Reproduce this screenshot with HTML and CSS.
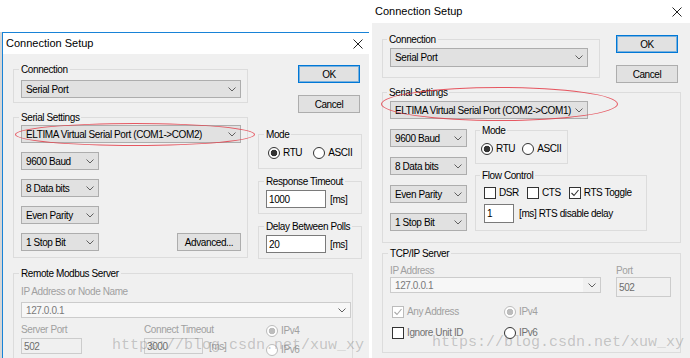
FILE: index.html
```html
<!DOCTYPE html>
<html lang="en">
<head>
  <meta charset="UTF-8">
  <title>Connection Setup</title>
  <link rel="stylesheet" href="styles.css">
</head>
<body>
<div class="desk">
  <div class="behind"></div>

  <!-- first dialog: Modbus master -->
  <div class="dlg dlg-a">
    <div class="titlebar">
      <span>Connection Setup</span>
      <svg class="close" width="10" height="10" viewBox="0 0 10 10"><path d="M0.5 0.5 9.5 9.5M9.5 0.5 0.5 9.5"/></svg>
    </div>
    <div class="body body-a">
      <div class="cols-a">
        <div class="col-a-left">
          <fieldset class="grp conn-a">
            <legend>Connection</legend>
            <div class="in">
              <div class="combo wide-a"><span>Serial Port</span><svg class="chev" width="8" height="5" viewBox="0 0 8 5"><path d="M0.5 0.5 4 4 7.5 0.5"/></svg></div>
            </div>
          </fieldset>
          <fieldset class="grp serial-a">
            <legend>Serial Settings</legend>
            <div class="in stack-a">
              <div class="combo wide-a"><span>ELTIMA Virtual Serial Port (COM1-&gt;COM2)</span><svg class="chev" width="8" height="5" viewBox="0 0 8 5"><path d="M0.5 0.5 4 4 7.5 0.5"/></svg></div>
              <div class="combo short-a"><span>9600 Baud</span><svg class="chev" width="8" height="5" viewBox="0 0 8 5"><path d="M0.5 0.5 4 4 7.5 0.5"/></svg></div>
              <div class="combo short-a"><span>8 Data bits</span><svg class="chev" width="8" height="5" viewBox="0 0 8 5"><path d="M0.5 0.5 4 4 7.5 0.5"/></svg></div>
              <div class="combo short-a"><span>Even Parity</span><svg class="chev" width="8" height="5" viewBox="0 0 8 5"><path d="M0.5 0.5 4 4 7.5 0.5"/></svg></div>
              <div class="stop-row">
                <div class="combo short-a"><span>1 Stop Bit</span><svg class="chev" width="8" height="5" viewBox="0 0 8 5"><path d="M0.5 0.5 4 4 7.5 0.5"/></svg></div>
                <button class="btn adv">Advanced...</button>
              </div>
            </div>
          </fieldset>
        </div>
        <div class="col-a-right">
          <button class="btn btn-default ok-a">OK</button>
          <button class="btn cancel-a">Cancel</button>
          <fieldset class="grp mode-a">
            <legend>Mode</legend>
            <div class="in radios radios-a">
              <label class="opt"><span class="radio on"></span>RTU</label>
              <label class="opt"><span class="radio"></span>ASCII</label>
            </div>
          </fieldset>
          <fieldset class="grp timeout-a">
            <legend>Response Timeout</legend>
            <div class="in ms-row"><div class="field ms-field">1000</div><span>[ms]</span></div>
          </fieldset>
          <fieldset class="grp timeout-a">
            <legend>Delay Between Polls</legend>
            <div class="in ms-row"><div class="field ms-field">20</div><span>[ms]</span></div>
          </fieldset>
        </div>
      </div>

      <fieldset class="grp remote">
        <legend>Remote Modbus Server</legend>
        <div class="in">
          <div class="off-label">IP Address or Node Name</div>
          <div class="combo edit node-combo"><span>127.0.0.1</span><svg class="chev" width="8" height="5" viewBox="0 0 8 5"><path d="M0.5 0.5 4 4 7.5 0.5"/></svg></div>
          <div class="remote-grid">
            <div>
              <div class="off-label">Server Port</div>
              <div class="field off port-a">502</div>
            </div>
            <div>
              <div class="off-label">Connect Timeout</div>
              <div class="ms-row ct-row"><div class="field off ct">3000</div><span class="off-text">[ms]</span></div>
            </div>
            <div class="ip-col">
              <label class="opt off-text"><span class="radio on off"></span>IPv4</label>
              <label class="opt off-text"><span class="radio off"></span>IPv6</label>
            </div>
          </div>
        </div>
      </fieldset>
    </div>
    <div class="ring ring-a"></div>
    <div class="mark mark-a">https://blog.csdn.net/xuw_xy</div>
  </div>

  <!-- second dialog: Modbus slave -->
  <div class="dlg dlg-b">
    <div class="titlebar">
      <span>Connection Setup</span>
      <svg class="close" width="10" height="10" viewBox="0 0 10 10"><path d="M0.5 0.5 9.5 9.5M9.5 0.5 0.5 9.5"/></svg>
    </div>
    <div class="body body-b">
      <div class="top-b">
        <fieldset class="grp conn-b">
          <legend>Connection</legend>
          <div class="in">
            <div class="combo wide-b tall"><span>Serial Port</span><svg class="chev" width="8" height="5" viewBox="0 0 8 5"><path d="M0.5 0.5 4 4 7.5 0.5"/></svg></div>
          </div>
        </fieldset>
        <div class="btns-b">
          <button class="btn btn-default">OK</button>
          <button class="btn cancel-b">Cancel</button>
        </div>
      </div>

      <fieldset class="grp serial-b">
        <legend>Serial Settings</legend>
        <div class="in">
          <div class="combo wide-b"><span>ELTIMA Virtual Serial Port (COM2-&gt;COM1)</span><svg class="chev" width="8" height="5" viewBox="0 0 8 5"><path d="M0.5 0.5 4 4 7.5 0.5"/></svg></div>
          <div class="serial-b-row">
            <div class="stack-b">
              <div class="combo short-b"><span>9600 Baud</span><svg class="chev" width="8" height="5" viewBox="0 0 8 5"><path d="M0.5 0.5 4 4 7.5 0.5"/></svg></div>
              <div class="combo short-b"><span>8 Data bits</span><svg class="chev" width="8" height="5" viewBox="0 0 8 5"><path d="M0.5 0.5 4 4 7.5 0.5"/></svg></div>
              <div class="combo short-b"><span>Even Parity</span><svg class="chev" width="8" height="5" viewBox="0 0 8 5"><path d="M0.5 0.5 4 4 7.5 0.5"/></svg></div>
              <div class="combo short-b"><span>1 Stop Bit</span><svg class="chev" width="8" height="5" viewBox="0 0 8 5"><path d="M0.5 0.5 4 4 7.5 0.5"/></svg></div>
            </div>
            <div class="groups-b">
              <fieldset class="grp mode-b">
                <legend>Mode</legend>
                <div class="in radios radios-b">
                  <label class="opt"><span class="radio on"></span>RTU</label>
                  <label class="opt"><span class="radio"></span>ASCII</label>
                </div>
              </fieldset>
              <fieldset class="grp flow-b">
                <legend>Flow Control</legend>
                <div class="in">
                  <div class="checks">
                    <label class="opt"><span class="chk"></span>DSR</label>
                    <label class="opt"><span class="chk"></span>CTS</label>
                    <label class="opt"><span class="chk"><svg width="10" height="10" viewBox="0 0 10 10"><path d="M1.5 5 4 7.5 8.5 2"/></svg></span>RTS Toggle</label>
                  </div>
                  <div class="ms-row delay-row"><div class="field small">1</div><span>[ms] RTS disable delay</span></div>
                </div>
              </fieldset>
            </div>
          </div>
        </div>
      </fieldset>

      <fieldset class="grp tcp">
        <legend>TCP/IP Server</legend>
        <div class="in">
          <div class="tcp-top">
            <div class="tcp-ip">
              <div class="off-label">IP Address</div>
              <div class="combo edit ip-combo"><span>127.0.0.1</span><span class="drop"><svg class="chev" width="8" height="5" viewBox="0 0 8 5"><path d="M0.5 0.5 4 4 7.5 0.5"/></svg></span></div>
            </div>
            <div class="tcp-port">
              <div class="off-label">Port</div>
              <div class="field off port-tcp">502</div>
            </div>
          </div>
          <div class="tcp-opts">
            <label class="opt off-text"><span class="chk off"><svg width="10" height="10" viewBox="0 0 10 10"><path d="M1.5 5 4 7.5 8.5 2"/></svg></span>Any Address</label>
            <label class="opt off-text"><span class="radio on off"></span>IPv4</label>
            <label class="opt dim"><span class="chk"></span>Ignore Unit ID</label>
            <label class="opt dim"><span class="radio"></span>IPv6</label>
          </div>
        </div>
      </fieldset>
    </div>
    <div class="ring ring-b"></div>
    <div class="mark mark-b">https://blog.csdn.net/xuw_xy</div>
  </div>
</div>
</body>
</html>
```

FILE: styles.css
```css
* {
  box-sizing: border-box;
}

body {
  margin: 0;
  background: #fff;
  font-family: "Liberation Sans", Arial, sans-serif;
  font-size: 10px;
  letter-spacing: -0.4px;
  line-height: 13px;
  color: #000;
}

.desk {
  position: relative;
  width: 690px;
  height: 358px;
  overflow: hidden;
  background: #fff;
}

/* window behind the first dialog */
.behind {
  position: absolute;
  left: 0;
  top: 32px;
  bottom: 0;
  width: 2px;
  background: #d6d6d6;
}

.dlg {
  position: absolute;
  background: #f0f0f0;
}

.dlg-a {
  left: 2px;
  top: 32px;
  width: 367px;
  bottom: 0;
  border-top: 1px solid #1883d7;
  border-left: 1px solid #1883d7;
}

.dlg-b {
  left: 372px;
  top: 0;
  width: 318px;
  bottom: 0;
}

.titlebar {
  display: flex;
  align-items: center;
  justify-content: space-between;
  background: #fff;
  font-size: 11px;
  letter-spacing: 0;
}

.dlg-a .titlebar {
  height: 21px;
  padding: 0 6px 0 3px;
}

.dlg-b .titlebar {
  height: 23px;
  padding: 0 8px 0 3px;
}

.close path {
  stroke: #222;
  stroke-width: 1;
  fill: none;
}

/* group boxes */
.grp {
  margin: 0;
  padding: 0;
  border: 1px solid #dcdcdc;
  min-width: 0;
}

.grp legend {
  margin-left: 5px;
  padding: 0 2px;
  line-height: 13px;
  white-space: nowrap;
}

/* controls */
.combo {
  display: flex;
  align-items: center;
  justify-content: space-between;
  height: 18px;
  padding: 0 4px;
  border: 1px solid #adadad;
  background: #e1e1e1;
  white-space: nowrap;
}

.chev path {
  fill: none;
  stroke: #606060;
  stroke-width: 1;
}

.btn {
  height: 18px;
  width: 62px;
  padding: 0;
  border: 1px solid #adadad;
  background: #e1e1e1;
  font: inherit;
  letter-spacing: inherit;
  color: #000;
}

.btn-default {
  border-color: #0078d7;
  box-shadow: inset 0 0 0 1px rgba(0, 120, 215, 0.45);
}

.field {
  display: flex;
  align-items: center;
  height: 18px;
  padding: 0 2px;
  border: 1px solid #7a7a7a;
  background: #fff;
}

.field.off {
  border-color: #cccccc;
  background: #f0f0f0;
  color: #6d6d6d;
}

.combo.edit {
  border-color: #cccccc;
  background: #f7f7f7;
  color: #7a7a7a;
}

.off-label,
.off-text {
  color: #a0a0a0;
}

.dim {
  color: #707070;
}

.opt {
  display: flex;
  align-items: center;
  gap: 3px;
  white-space: nowrap;
}

.radio {
  width: 12px;
  height: 12px;
  border: 1px solid #333;
  border-radius: 50%;
  background: #fff;
}

.radio.on {
  background: radial-gradient(circle, #333 0 3px, #fff 3.6px);
}

.radio.off {
  border-color: #bcbcbc;
  background: #fff;
}

.radio.on.off {
  background: radial-gradient(circle, #bcbcbc 0 3px, #fff 3.6px);
}

.chk {
  display: flex;
  align-items: center;
  justify-content: center;
  width: 12px;
  height: 12px;
  border: 1px solid #333;
  background: #fff;
}

.chk path {
  fill: none;
  stroke: #333;
  stroke-width: 1.1;
}

.chk.off {
  border-color: #bcbcbc;
}

.chk.off path {
  stroke: #a8a8a8;
}

.radios {
  display: flex;
  align-items: center;
}

.ms-row {
  display: flex;
  align-items: center;
  gap: 4px;
}

/* ---------- first dialog ---------- */
.body-a {
  padding: 9px 0 0 10px;
}

.cols-a {
  display: flex;
  gap: 10px;
}

.col-a-left {
  width: 235px;
}

.col-a-right {
  width: 104px;
  display: flex;
  flex-direction: column;
}

.conn-a .in {
  padding: 4px 6px 4px 7px;
}

.wide-a {
  width: 220px;
}

.short-a {
  width: 78px;
}

.serial-a {
  margin-top: 8px;
}

.stack-a {
  display: flex;
  flex-direction: column;
  gap: 9px;
  padding: 1px 6px 6px 7px;
}

.stop-row {
  display: flex;
  justify-content: space-between;
  width: 220px;
}

.btn.adv {
  width: 64px;
}

.ok-a {
  align-self: flex-end;
  margin: 2px 2px 0 0;
}

.cancel-a {
  align-self: flex-end;
  margin: 12px 2px 0 0;
}

.mode-a {
  margin-top: 15px;
}

.radios-a {
  gap: 11px;
  padding: 5px 0 9px 9px;
}

.timeout-a {
  margin-top: 6px;
}

.timeout-a .in {
  padding: 2px 0 5px 7px;
}

.ms-field {
  width: 60px;
}

.remote {
  margin-top: 8px;
  width: 340px;
}

.remote .in {
  padding: 5px 1px 10px 7px;
}

.node-combo {
  margin-top: 4px;
  height: 16px;
  width: 330px;
}

.remote-grid {
  display: grid;
  grid-template-columns: 123px 122px auto;
  margin-top: 5px;
}

.port-a {
  margin-top: 2px;
  height: 16px;
  width: 61px;
}

.ct-row {
  margin-top: 2px;
  gap: 6px;
}

.ct {
  height: 16px;
  width: 59px;
}

.ip-col {
  display: flex;
  flex-direction: column;
  gap: 6px;
  padding-top: 1px;
}

/* ---------- second dialog ---------- */
.body-b {
  padding: 10px 0 0 10px;
}

.top-b {
  display: flex;
  align-items: flex-start;
}

.conn-b {
  width: 218px;
}

.conn-b legend,
.serial-b legend {
  margin-left: 4px;
}

.conn-b .in {
  padding: 2px 0 10px 7px;
}

.wide-b {
  width: 198px;
}

.combo.tall {
  height: 19px;
}

.btns-b {
  display: flex;
  flex-direction: column;
  margin-left: 16px;
  padding-top: 2px;
}

.cancel-b {
  margin-top: 12px;
}

.serial-b {
  margin-top: 3px;
  width: 299px;
}

.serial-b > .in {
  padding: 2px 0 11px 7px;
}

.serial-b-row {
  display: flex;
  align-items: flex-start;
  margin-top: 5px;
}

.stack-b {
  display: flex;
  flex-direction: column;
  gap: 10px;
  margin-top: 5px;
}

.short-b {
  width: 77px;
}

.groups-b {
  display: flex;
  flex-direction: column;
  gap: 5px;
  margin-left: 8px;
}

.mode-b {
  width: 93px;
}

.radios-b {
  gap: 7px;
  padding: 5px 0 8px 5px;
}

.flow-b {
  width: 172px;
}

.flow-b .in {
  padding: 4px 0 7px 8px;
}

.checks {
  display: flex;
  gap: 8px;
}

.delay-row {
  margin-top: 5px;
  gap: 5px;
}

.field.small {
  width: 30px;
  height: 19px;
}

.tcp {
  margin-top: 4px;
  width: 299px;
}

.tcp .in {
  padding: 4px 0 13px 7px;
}

.tcp-top {
  display: flex;
  gap: 15px;
}

.tcp-ip {
  width: 211px;
}

.ip-combo {
  height: 16px;
  padding-right: 0;
  background: #fff;
  color: #555;
}

.drop {
  display: flex;
  align-items: center;
  justify-content: center;
  width: 17px;
  height: 14px;
  background: #f0f0f0;
}

.port-tcp {
  width: 55px;
  height: 20px;
}

.tcp-opts {
  display: grid;
  grid-template-columns: 112px auto;
  row-gap: 8px;
  margin-top: 8px;
  padding-left: 2px;
}

/* marks drawn over the screenshots */
.ring {
  position: absolute;
  border: 1px solid rgba(228, 60, 72, 0.85);
  border-radius: 50%;
  pointer-events: none;
}

.ring-a {
  left: 12px;
  top: 90px;
  width: 240px;
  height: 23px;
}

.ring-b {
  left: 9px;
  top: 87px;
  width: 237px;
  height: 34px;
}

.mark {
  position: absolute;
  font-family: "Liberation Mono", monospace;
  font-size: 15px;
  letter-spacing: 0;
  line-height: 15px;
  color: rgba(100, 100, 100, 0.33);
  white-space: nowrap;
  pointer-events: none;
}

.mark-a {
  left: 109px;
  top: 305px;
}

.mark-b {
  left: 60px;
  top: 335px;
}
```
